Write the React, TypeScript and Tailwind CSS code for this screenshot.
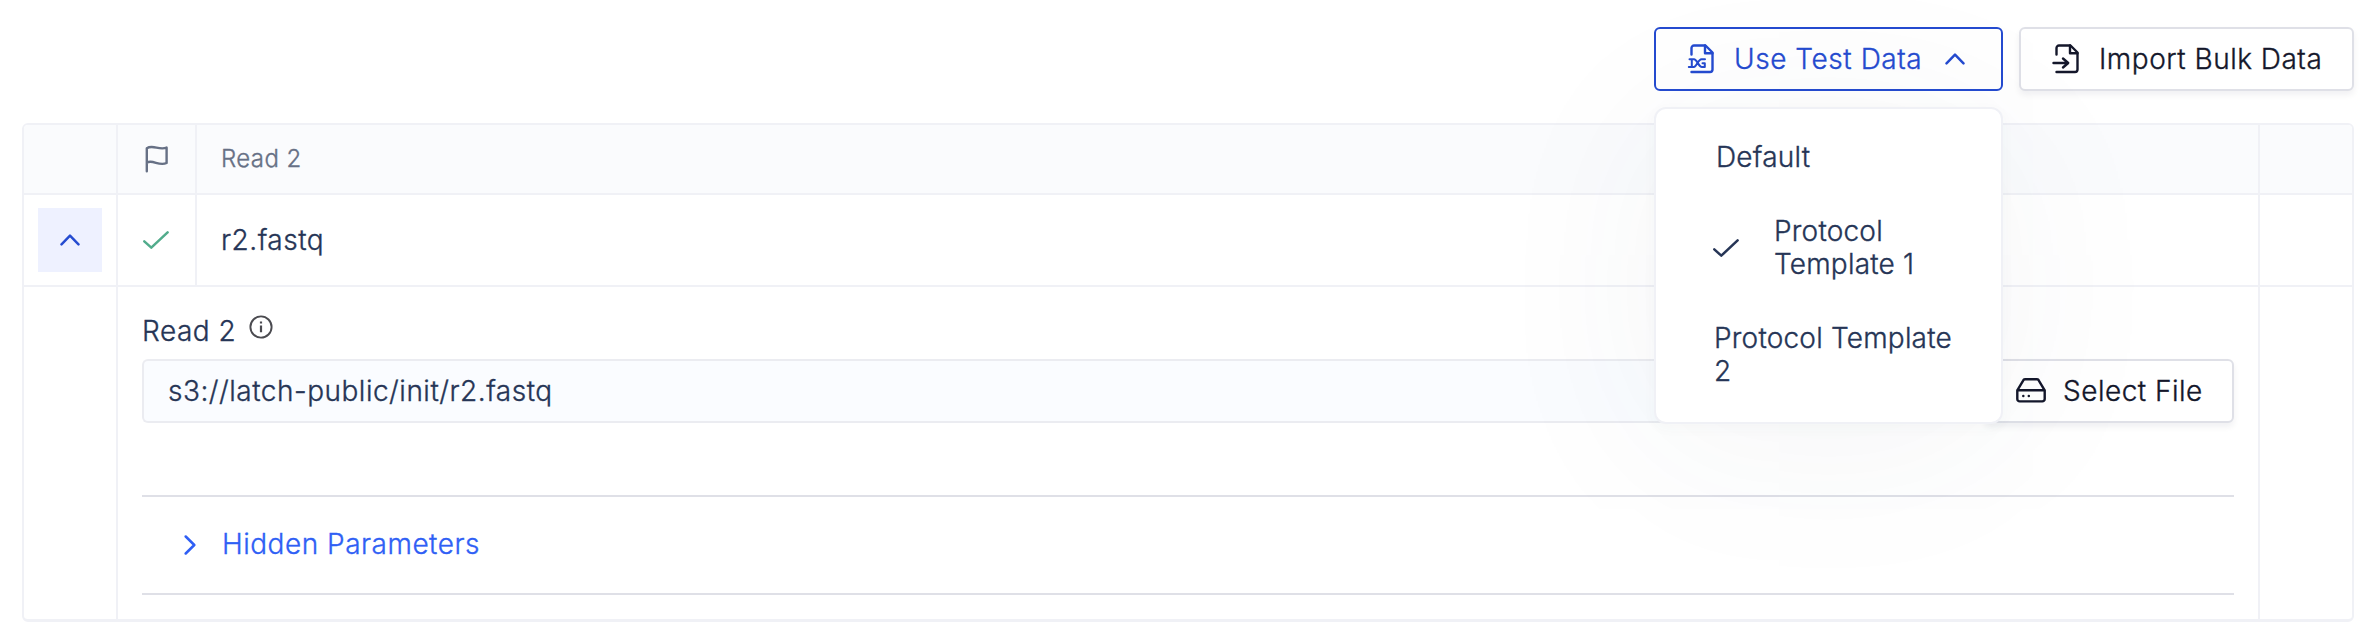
import React from "react";

type IconProps = { className?: string };

const stroke = {
  fill: "none",
  stroke: "currentColor",
  strokeLinecap: "round" as const,
  strokeLinejoin: "round" as const,
};

function FileOutline() {
  return (
    <>
      <path d="M4.500 11.500V5a2.500 2.500 0 0 1 2.500-2.500H18.500l7 7V26.500a2.500 2.500 0 0 1-2.500 2.500H4.500" />
      <path d="M18 2.500v7.800h7.500" />
    </>
  );
}

function TestDataIcon({ className }: IconProps) {
  return (
    <svg viewBox="0 0 28 32" className={className} {...stroke} strokeWidth={2.4}>
      <FileOutline />
      <path strokeWidth={2} d="M2.500 16.200h4.500c3 0 4.500 7.800 8 7.800h2.800v-3.800h-2.300M1.800 24h5c3 0 4.200-7.800 7.700-7.800h3.500M4.800 16.200v7.800" />
    </svg>
  );
}

function ImportIcon({ className }: IconProps) {
  return (
    <svg viewBox="0 0 28 32" className={className} {...stroke} strokeWidth={2.4}>
      <FileOutline />
      <path d="M1.500 20h14.500M11 15.500l5.200 4.500-5.200 4.500" />
    </svg>
  );
}

function ChevronUp({ className }: IconProps) {
  return (
    <svg viewBox="0 0 20 12" className={className} {...stroke} strokeWidth={2.5}>
      <path d="M1.5 10.300 10 1.700l8.500 8.600" />
    </svg>
  );
}

function Check({ className }: IconProps) {
  return (
    <svg viewBox="0 0 26 18" className={className} {...stroke} strokeWidth={2.5}>
      <path d="M1.3 10.300 8.300 16.700 24.600 1.400" />
    </svg>
  );
}

function Flag({ className }: IconProps) {
  return (
    <svg viewBox="0 0 24 28" className={className} {...stroke} strokeWidth={2.4}>
      <path d="M1.800 26.300V3.200C8 -0.800 14 5.600 21.600 2.600V18C14 21.600 8 14.200 1.800 17.600" />
    </svg>
  );
}

function Info({ className }: IconProps) {
  return (
    <svg viewBox="0 0 24 24" className={className} {...stroke} strokeWidth={1.9}>
      <circle cx="12" cy="12" r="10.6" />
      <path strokeLinecap="butt" strokeWidth={2.2} d="M12 10.500v6.800M12 6.400v2.200" />
    </svg>
  );
}

function Drive({ className }: IconProps) {
  return (
    <svg viewBox="0 0 30 26" className={className} {...stroke} strokeWidth={2.4}>
      <path d="M1.300 12.300h27.400M7 2.800C7.400 1.800 8 1.300 9 1.300h12c1 0 1.600.5 2 1.500l5.700 9.500V21a2.400 2.400 0 0 1-2.400 2.400H3.700A2.400 2.400 0 0 1 1.300 21v-8.700z" />
      <path strokeWidth={2.500} d="M7.300 18h.01M12.800 18h.01" />
    </svg>
  );
}

export default function App() {
  return (
    <div className="h-[622px] w-[2378px] overflow-hidden bg-white pl-[22px] pr-6 pt-[27px] font-['Inter',sans-serif] text-[28px] font-light leading-[34px] tracking-[0.5px] text-[#263556] [-webkit-text-stroke:0.35px]">
      <div className="flex justify-end gap-4">
        <div className="relative z-10 w-[349px]">
          <button className="flex h-16 w-full items-center rounded-md border-2 border-[#254bd0] pl-[31px] text-[#254bd0]">
            <TestDataIcon className="h-8 w-7" />
            <span className="-mt-px ml-[19px] whitespace-nowrap tracking-[0.55px]">Use Test Data</span>
            <ChevronUp className="ml-auto mr-[36px] h-3 w-5" />
          </button>
          <ul className="absolute left-0 top-20 flex h-[317px] w-[349px] flex-col rounded-xl border-2 border-[#f0f1f6] bg-white pt-8 leading-[33.6px] tracking-[0.2px] shadow-[0_20px_190px_rgba(60,80,100,0.055),0_4px_14px_rgba(60,80,100,0.03)]">
            <li className="pl-[60px]">Default</li>
            <li className="mt-10 flex items-center pl-[57px]">
              <Check className="h-[18px] w-[26px]" />
              <span className="ml-[35px] w-[160px]">Protocol Template 1</span>
            </li>
            <li className="mt-10 pl-[58px] pr-10">Protocol Template 2</li>
          </ul>
        </div>
        <button className="flex h-16 w-[335px] items-center rounded-md border-2 border-[#dfe0e7] bg-white pl-[31px] text-[#14172b] shadow-[0_4px_6px_rgba(20,23,43,0.06)]">
          <ImportIcon className="h-8 w-7" />
          <span className="-mt-px ml-[19px] whitespace-nowrap">Import Bulk Data</span>
        </button>
      </div>

      <div className="mt-8 grid h-[499px] grid-cols-[94px_79px_1fr_92px] grid-rows-[70px_92px_1fr] overflow-hidden rounded-md border-2 border-b-[3px] border-[#f0f1f6]">
        <div className="border-b-2 border-r-2 border-[#f0f1f6] bg-[#fafbfd]" />
        <div className="flex items-center border-b-2 border-r-2 border-[#f0f1f6] bg-[#fafbfd] pl-[27px] text-[#667085]">
          <Flag className="h-7 w-6" />
        </div>
        <div className="flex items-center border-b-2 border-r-2 border-[#f0f1f6] bg-[#fafbfd] pl-6 text-[24px] tracking-[0.4px] text-[#667085]">
          Read 2
        </div>
        <div className="border-b-2 border-[#f0f1f6] bg-[#fafbfd]" />

        <div className="flex items-center justify-center border-b-2 border-r-2 border-[#f0f1f6]">
          <button className="flex h-16 w-16 items-center justify-center bg-[#eef1ff] text-[#254bd0]">
            <ChevronUp className="h-3 w-5" />
          </button>
        </div>
        <div className="flex items-center border-b-2 border-r-2 border-[#f0f1f6] pl-[25px] text-[#52ac8c]">
          <Check className="h-[18px] w-[26px]" />
        </div>
        <div className="flex items-center border-b-2 border-r-2 border-[#f0f1f6] pl-6">r2.fastq</div>
        <div className="border-b-2 border-[#f0f1f6]" />

        <div className="border-r-2 border-[#f0f1f6]" />
        <div className="col-span-2 border-r-2 border-[#f0f1f6] px-6 pt-[27px]">
          <div className="flex">
            <span>Read 2</span>
            <Info className="ml-[13px] mt-px h-6 w-6 text-[#4b4b50]" />
          </div>
          <div className="mt-[11px] flex h-16">
            <div className="flex flex-1 items-center rounded-l-md border-2 border-r-0 border-[#ebecf1] bg-[#fafcff] pl-6">
              s3://latch-public/init/r2.fastq
            </div>
            <button className="flex w-[250px] items-center rounded-md border-2 border-[#dfe0e7] bg-white pl-[30px] text-[#14172b] shadow-[0_4px_6px_rgba(20,23,43,0.06)]">
              <Drive className="h-[26px] w-[30px]" />
              <span className="-mt-px ml-[17px] whitespace-nowrap">Select File</span>
            </button>
          </div>
          <div className="mt-[72px] flex h-[100px] items-center border-y-2 border-[#dfe0e7] pl-[42px] text-[#2f5ff5]">
            <ChevronUp className="-ml-1 h-3 w-5 rotate-90" />
            <span className="-mt-[3px] ml-[22px]">Hidden Parameters</span>
          </div>
        </div>
        <div />
      </div>
    </div>
  );
}
